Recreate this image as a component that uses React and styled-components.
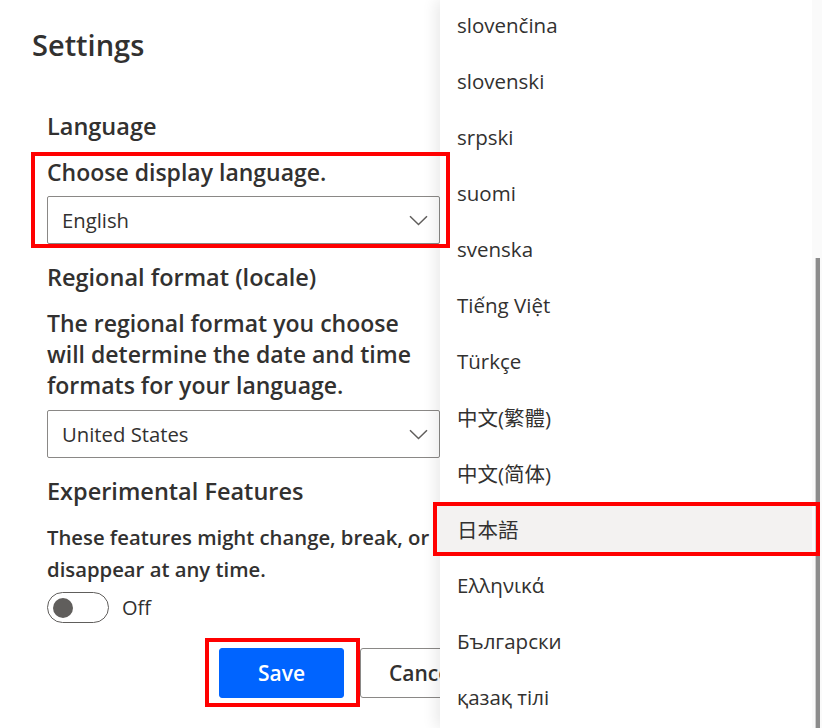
import React from "react";
import styled, { createGlobalStyle } from "styled-components";

const GlobalStyle = createGlobalStyle`
  html, body {
    margin: 0;
    padding: 0;
    background: #ffffff;
  }
  body {
    font-family: "Open Sans", "Noto Sans", "Noto Sans CJK SC", sans-serif;
    color: #323130;
    overflow: hidden;
  }
`;

const Page = styled.div`
  position: relative;
  width: 822px;
  height: 728px;
  overflow: hidden;
  background: #ffffff;
`;

const SettingsPanel = styled.div`
  padding: 27px 0 0 32px;
`;

const Title = styled.h1`
  margin: 0;
  font-size: 29px;
  line-height: 36px;
  font-weight: 600;
  color: #323130;
`;

const Body = styled.div`
  width: 393px;
  padding-left: 15px;
  display: flex;
  flex-direction: column;
`;

const SectionHeading = styled.h2`
  margin: ${(p) => p.$top || 18}px 0 0;
  font-size: 23.5px;
  line-height: 30px;
  font-weight: 600;
  color: #323130;
`;

const FieldLabel = styled.div`
  margin-top: ${(p) => p.$top || 0}px;
  font-size: ${(p) => p.$size || 23}px;
  line-height: ${(p) => p.$lh || 30}px;
  font-weight: 600;
  color: #323130;
  white-space: ${(p) => (p.$nowrap ? "nowrap" : "normal")};
`;

const Highlighted = styled.div`
  position: relative;
  margin-top: ${(p) => p.$top || 0}px;
  &::after {
    content: "";
    position: absolute;
    z-index: 2;
    top: -5px;
    left: -16px;
    right: -10px;
    bottom: -4px;
    border: 4px solid #ff0000;
    pointer-events: none;
  }
`;

const Select = styled.div`
  margin-top: ${(p) => p.$top || 0}px;
  height: 48px;
  box-sizing: border-box;
  border: 1px solid #8a8886;
  border-radius: 2px;
  display: flex;
  align-items: center;
  justify-content: space-between;
  padding: 0 11px 0 14px;
  font-size: 20.3px;
  color: #323130;
  background: #fff;
`;

const Chevron = () => (
  <svg width="19" height="11" viewBox="0 0 19 11" fill="none">
    <path d="M1 1.2 L9.5 9.5 L18 1.2" stroke="#605e5c" strokeWidth="1.5" />
  </svg>
);

const ToggleRow = styled.div`
  margin-top: 7px;
  display: flex;
  align-items: center;
  gap: 13px;
  font-size: 20px;
  color: #323130;
`;

const ToggleTrack = styled.div`
  width: 62px;
  height: 31px;
  box-sizing: border-box;
  border: 1.5px solid #605e5c;
  border-radius: 16px;
  display: flex;
  align-items: center;
  padding-left: 5px;
`;

const ToggleKnob = styled.div`
  width: 20px;
  height: 20px;
  border-radius: 50%;
  background: #605e5c;
`;

const Footer = styled.div`
  margin-top: 25px;
  display: flex;
  gap: 16px;
  padding-left: 172px;
`;

const Button = styled.button`
  position: relative;
  width: 125px;
  height: 50px;
  flex-shrink: 0;
  box-sizing: border-box;
  border-radius: 3px;
  font-family: "Open Sans", sans-serif;
  font-size: 21px;
  font-weight: 600;
  cursor: pointer;
  border: 1px solid ${(p) => (p.$primary ? "#0064ff" : "#8a8886")};
  background: ${(p) => (p.$primary ? "#0064ff" : "#ffffff")};
  color: ${(p) => (p.$primary ? "#ffffff" : "#323130")};
  ${(p) =>
    p.$marked &&
    `
    &::after {
      content: "";
      position: absolute;
      top: -11px;
      left: -15px;
      right: -17px;
      bottom: -10px;
      border: 4px solid #ff0000;
      pointer-events: none;
    }
  `}
`;

const Menu = styled.div`
  position: absolute;
  z-index: 1;
  top: 0;
  left: 440px;
  right: 0;
  bottom: 0;
  display: flex;
  background: #ffffff;
  box-shadow: -4px 0 14px rgba(0, 0, 0, 0.09);
`;

const MenuList = styled.ul`
  list-style: none;
  margin: 0;
  padding: 2px 0 0;
  flex: 1;
  display: flex;
  flex-direction: column;
  gap: 10px;
`;

const MenuItem = styled.li`
  position: relative;
  height: 46px;
  flex-shrink: 0;
  display: flex;
  align-items: center;
  padding-left: 17px;
  font-size: 20.5px;
  color: #323130;
  background: ${(p) => (p.$active ? "#f3f2f1" : "transparent")};
  ${(p) =>
    p.$active &&
    `
    &::after {
      content: "";
      position: absolute;
      z-index: 2;
      top: -4px;
      left: -7px;
      right: -8px;
      bottom: -4px;
      border: 4px solid #ff0000;
      pointer-events: none;
    }
  `}
`;

const ScrollTrack = styled.div`
  position: relative;
  width: 10px;
  background: #fafafa;
`;

const ScrollThumb = styled.div`
  position: absolute;
  top: 258px;
  bottom: 0;
  left: 3px;
  width: 4px;
  background: #8c8c8c;
  border-left: 1px solid #d0d0d0;
`;

const languages = [
  "slovenčina",
  "slovenski",
  "srpski",
  "suomi",
  "svenska",
  "Tiếng Việt",
  "Türkçe",
  "中文(繁體)",
  "中文(简体)",
  "日本語",
  "Ελληνικά",
  "Български",
  "қазақ тілі",
];

export default function App() {
  return (
    <Page>
      <GlobalStyle />
      <SettingsPanel>
        <Title>Settings</Title>
        <Body>
          <SectionHeading $top={48}>Language</SectionHeading>
          <Highlighted $top={16}>
            <FieldLabel>Choose display language.</FieldLabel>
            <Select $top={9}>
              English
              <Chevron />
            </Select>
          </Highlighted>
          <SectionHeading $top={18}>Regional format (locale)</SectionHeading>
          <FieldLabel $top={16} $lh={31}>
            The regional format you choose will determine the date and time
            formats for your language.
          </FieldLabel>
          <Select $top={9}>
            United States
            <Chevron />
          </Select>
          <SectionHeading $top={18}>Experimental Features</SectionHeading>
          <FieldLabel $top={15} $size={20.3} $lh={32} $nowrap>
            These features might change, break, or
          </FieldLabel>
          <FieldLabel $size={20.3} $lh={32}>
            disappear at any time.
          </FieldLabel>
          <ToggleRow>
            <ToggleTrack>
              <ToggleKnob />
            </ToggleTrack>
            Off
          </ToggleRow>
          <Footer>
            <Button $primary $marked>
              Save
            </Button>
            <Button>Cancel</Button>
          </Footer>
        </Body>
      </SettingsPanel>
      <Menu>
        <MenuList>
          {languages.map((lang) => (
            <MenuItem key={lang} $active={lang === "日本語"}>
              {lang}
            </MenuItem>
          ))}
        </MenuList>
        <ScrollTrack>
          <ScrollThumb />
        </ScrollTrack>
      </Menu>
    </Page>
  );
}
